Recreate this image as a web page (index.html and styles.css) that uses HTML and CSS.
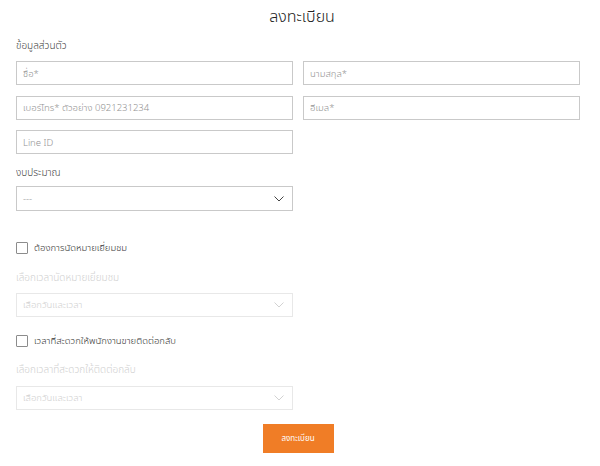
FILE: index.html
```html
<!DOCTYPE html>
<html lang="th">
<head>
<meta charset="utf-8">
<title>ลงทะเบียน</title>
<link rel="stylesheet" href="styles.css">
</head>
<body>
<div class="page">
  <h1 class="title">ลงทะเบียน</h1>
  <div class="section-label">ข้อมูลส่วนตัว</div>
  <div class="grid">
    <input class="field" type="text" placeholder="ชื่อ*">
    <input class="field" type="text" placeholder="นามสกุล*">
    <input class="field" type="text" placeholder="เบอร์โทร* ตัวอย่าง 0921231234">
    <input class="field" type="text" placeholder="อีเมล*">
    <input class="field" type="text" placeholder="Line ID">
  </div>
  <div class="label budget-label">งบประมาณ</div>
  <div class="select budget">
    <span class="select-text">---</span>
    <svg class="chev" width="10" height="6" viewBox="0 0 10 6"><path d="M0.5 0.5 L5 5 L9.5 0.5" fill="none" stroke="#444" stroke-width="1"/></svg>
  </div>

  <label class="check check-1"><span class="box"></span><span>ต้องการนัดหมายเยี่ยมชม</span></label>
  <div class="label muted-label">เลือกเวลานัดหมายเยี่ยมชม</div>
  <div class="select disabled">
    <span class="select-text">เลือกวันและเวลา</span>
    <svg class="chev" width="10" height="6" viewBox="0 0 10 6"><path d="M0.5 0.5 L5 5 L9.5 0.5" fill="none" stroke="#d2d2d2" stroke-width="1"/></svg>
  </div>

  <label class="check check-2"><span class="box"></span><span>เวลาที่สะดวกให้พนักงานขายติดต่อกลับ</span></label>
  <div class="label muted-label">เลือกเวลาที่สะดวกให้ติดต่อกลับ</div>
  <div class="select disabled">
    <span class="select-text">เลือกวันและเวลา</span>
    <svg class="chev" width="10" height="6" viewBox="0 0 10 6"><path d="M0.5 0.5 L5 5 L9.5 0.5" fill="none" stroke="#d2d2d2" stroke-width="1"/></svg>
  </div>

  <div class="actions">
    <button class="submit" type="button">ลงทะเบียน</button>
  </div>
</div>
</body>
</html>
```

FILE: styles.css
```css
* { box-sizing: border-box; }
html, body { margin: 0; padding: 0; background: #fff; }
body {
  font-family: "Noto Sans", "Noto Sans Thai", "Noto Sans Thai UI", "Open Sans", sans-serif;
  font-weight: 300;
  color: #333;
}
.page {
  width: 564px;
  margin-left: 16px;
}
.title {
  margin: 0;
  padding-top: 4px;
  height: 30px;
  font-size: 16px;
  font-weight: 300;
  line-height: 24px;
  text-align: center;
  color: #222;
  padding-left: 8px;
  overflow: hidden;
}
.section-label {
  margin-top: 7px;
  font-size: 10px;
  font-weight: 350;
  line-height: 16px;
  height: 16px;
  color: #444;
  overflow: hidden;
}
.grid {
  margin-top: 8px;
  display: grid;
  grid-template-columns: 277px 277px;
  column-gap: 10px;
  row-gap: 10.5px;
}
.field {
  height: 24px;
  border: 1px solid #c9c9c9;
  border-radius: 0;
  padding: 0 6px;
  font-family: inherit;
  font-weight: 300;
  font-size: 9.5px;
  color: #333;
  outline: none;
  background: #fff;
  width: 100%;
}
.field::placeholder { color: #929292; }
.label {
  font-size: 10px;
  line-height: 16px;
  height: 16px;
  overflow: hidden;
}
.budget-label { margin-top: 10px; color: #444; font-weight: 350; }
.select {
  width: 277px;
  height: 25px;
  border: 1px solid #c9c9c9;
  display: flex;
  align-items: center;
  justify-content: space-between;
  padding: 0 8px 0 6px;
  font-size: 9.5px;
  color: #929292;
  overflow: hidden;
}
.select.budget { margin-top: 6px; }
.select.disabled {
  height: 24px;
  border-color: #e8e8e8;
  color: #d0d0d0;
}
.check {
  display: flex;
  align-items: center;
  gap: 6px;
  height: 12px;
  font-size: 9.5px;
  font-weight: 350;
  line-height: 12px;
  color: #333;
}
.check-1 { margin-top: 31px; }
.check-2 { margin-top: 18px; }
.box {
  width: 12px;
  height: 12px;
  border: 1px solid #8c8c8c;
  border-radius: 1px;
  display: inline-block;
  flex: none;
}
.muted-label { margin-top: 15px; color: #d0d0d0; }
.check-2 + .muted-label { margin-top: 14px; }
.select.disabled { margin-top: 8px; }
.check-2 + .muted-label + .select.disabled { margin-top: 9px; }
.actions {
  display: flex;
  justify-content: center;
  margin-top: 14px;
}
.submit {
  width: 71px;
  height: 29px;
  border: none;
  background: #f07d26;
  color: #fff;
  font-family: inherit;
  font-weight: 400;
  font-size: 8px;
  padding: 0;
}
```
